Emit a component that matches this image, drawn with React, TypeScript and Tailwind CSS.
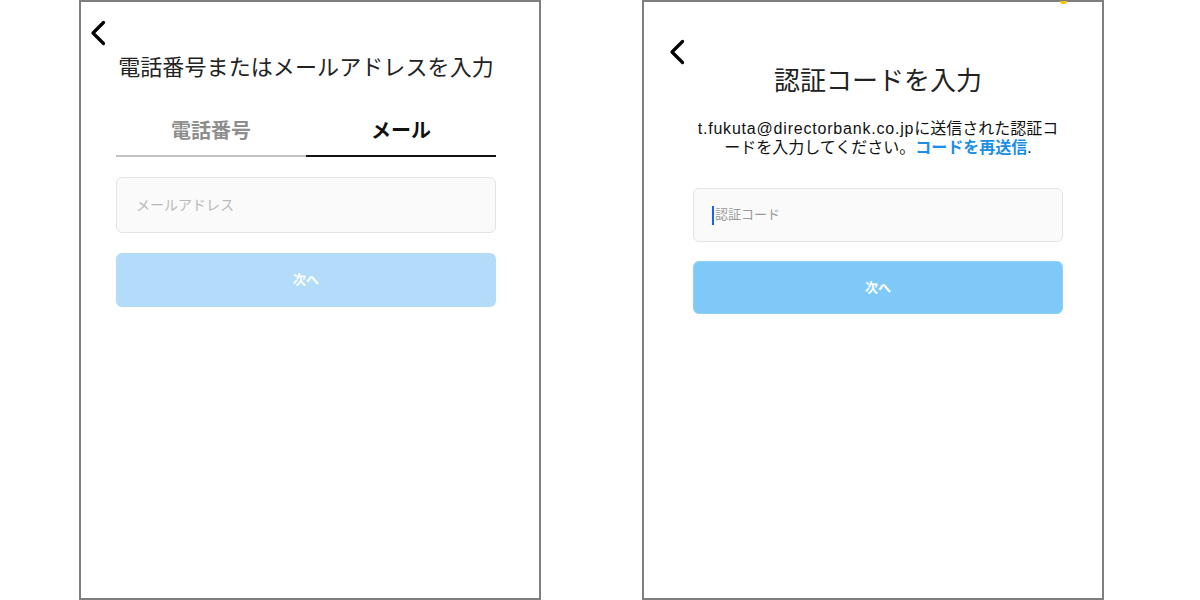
import React from "react";

const FONT = { fontFamily: '"Liberation Sans", "Noto Sans CJK JP", sans-serif' };

function Chevron() {
  return (
    <svg width="16" height="26" viewBox="0 0 16 26" fill="none">
      <path d="M13.5 2.5 L3 13 L13.5 23.5" stroke="#000" strokeWidth="3.2" strokeLinecap="round" strokeLinejoin="round" />
    </svg>
  );
}

export default function App() {
  return (
    <div className="w-[1200px] h-[600px] bg-white flex pl-[79px] gap-[101px] overflow-hidden" style={FONT}>
      {/* Frame 1 */}
      <div className="w-[462px] h-[600px] border-2 border-[#7f7f7f] flex flex-col">
        <div className="pt-[18px] pl-[9px] h-[46px]">
          <Chevron />
        </div>
        <div className="ml-[35px] w-[380px] flex flex-col">
          <div className="mt-[6px] text-[22px] leading-[28px] text-[#222] text-center whitespace-nowrap tracking-[0.1px]">
            電話番号またはメールアドレスを入力
          </div>
          <div className="mt-[35px] flex">
            <div className="flex-1 h-[40px] border-b-2 border-[#c2c2c2] text-center text-[20px] leading-[28px] font-bold text-[#8e8e8e]">
              電話番号
            </div>
            <div className="flex-1 h-[40px] border-b-2 border-[#111] text-center text-[20px] leading-[28px] font-bold text-[#111]">
              メール
            </div>
          </div>
          <div className="mt-[20px] h-[56px] rounded-[6px] border border-[#e4e4e4] bg-[#fafafa] flex items-center pl-[19px] text-[14px] text-[#b9b9b9]">
            メールアドレス
          </div>
          <div className="mt-[20px] h-[54px] rounded-[6px] bg-[#b2dcf9] flex items-center justify-center text-[13px] font-bold text-white">
            次へ
          </div>
        </div>
      </div>

      {/* Frame 2 */}
      <div className="relative w-[462px] h-[600px] border-2 border-[#7f7f7f] flex flex-col">
        <span className="absolute top-[-1px] left-[416px] w-[7px] h-[3px] rounded-b-full bg-[#f5c400]" />
        <div className="pt-[37px] pl-[25px] h-[63px]">
          <Chevron />
        </div>
        <div className="ml-[49px] w-[370px] flex flex-col items-center">
          <div className="text-[26px] leading-[32px] text-[#222] whitespace-nowrap">
            認証コードを入力
          </div>
          <div className="mt-[22px] text-[16px] leading-[19px] text-[#111] text-center">
            <div className="whitespace-nowrap">
              <span className="tracking-[0.8px]">t.fukuta@directorbank.co.jp</span>に送信された認証コ
            </div>
            <div className="whitespace-nowrap">
              ードを入力してください。<span className="text-[#1b8ee6] font-bold">コードを再送信</span>.
            </div>
          </div>
          <div className="mt-[31px] w-full h-[54px] rounded-[6px] border border-[#e4e4e4] bg-[#fafafa] flex items-center pl-[18px] text-[13px] text-[#9a9a9a]">
            <span className="w-[2px] h-[19px] bg-[#1463f0] mr-[1px]" />
            認証コード
          </div>
          <div className="mt-[19px] w-full h-[53px] rounded-[6px] bg-[#7fc9f8] border border-[#8fd0f8] flex items-center justify-center text-[13px] font-bold text-white">
            次へ
          </div>
        </div>
      </div>
    </div>
  );
}
